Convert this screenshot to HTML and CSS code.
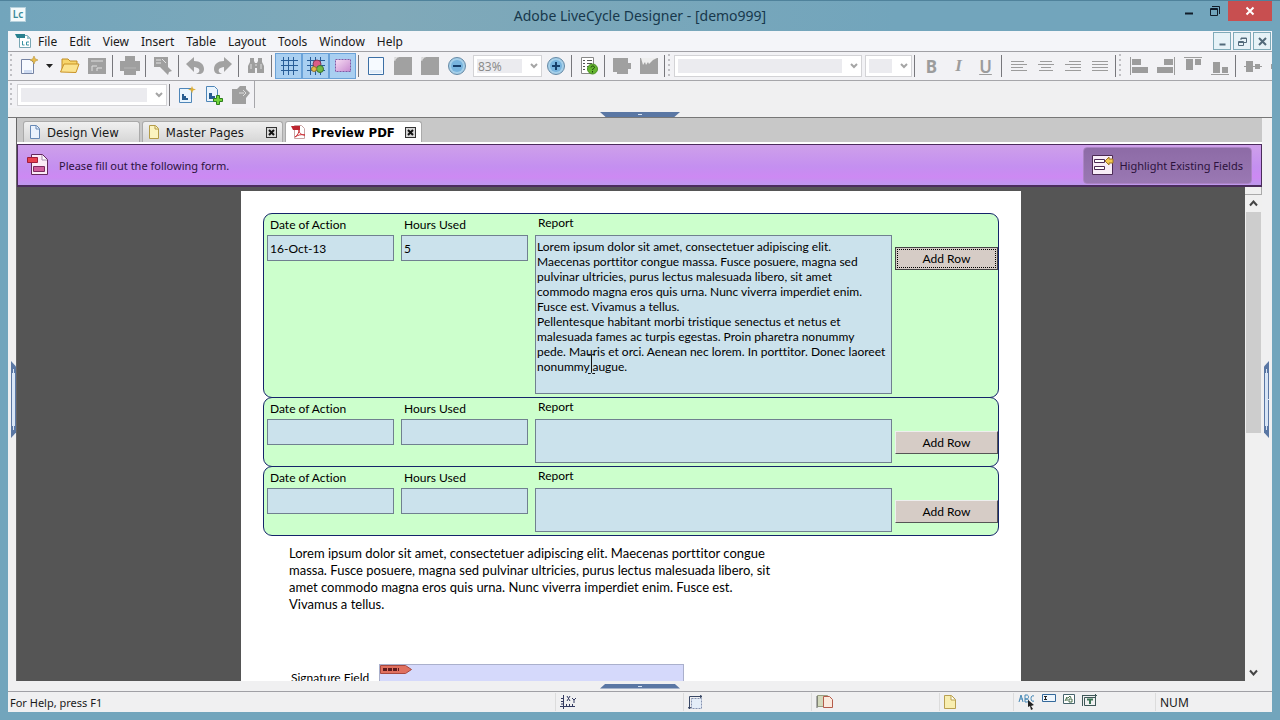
FILE: index.html
```
<!DOCTYPE html>
<html lang="en">
<head>
  <meta charset="UTF-8" />
  <meta name="viewport" content="width=device-width, initial-scale=1.0"/>
  <title>Adobe LiveCycle Designer - [demo999]</title>
  <link rel="stylesheet" href="styles.css">
</head>
<body>
  <header class="title-bar">
    <span class="app-icon">Lc</span>
    <h1>Adobe LiveCycle Designer - [demo999]</h1>
    <div class="window-buttons">
      <button type="button" aria-label="Minimize"><svg width="12" height="12"><path d="M2 8.500h8" stroke="#111d2a" stroke-width="2"/></svg></button>
      <button type="button" aria-label="Restore"><svg width="12" height="12" fill="none" stroke="#111d2a"><path d="M3 1.500h7.500V9"/><path d="M1.500 3.500h7v7h-7zM1.500 4.500h7"/></svg></button>
      <button type="button" class="close" aria-label="Close"><svg width="10" height="10"><path d="M1.500 1.500l7 7M8.500 1.500l-7 7" stroke="#fff" stroke-width="2"/></svg></button>
    </div>
  </header>

  <div class="client">
    <nav class="menu-bar">
      <svg class="menu-icon" width="18" height="17"><path d="M4.500 2.500h8l3 3v9h-11z" fill="#fff" stroke="#7aa7b5"/><path d="M12 2l4 4h-4z" fill="#9bc3cc"/><path d="M0 1h10v4H2z" fill="#28808f"/><path d="M7.500 8v4h2M14 9h-2.500v3H14" fill="none" stroke="#3b93a2"/></svg>
      <a href="#">File</a>
      <a href="#">Edit</a>
      <a href="#">View</a>
      <a href="#">Insert</a>
      <a href="#">Table</a>
      <a href="#">Layout</a>
      <a href="#">Tools</a>
      <a href="#">Window</a>
      <a href="#">Help</a>
      <div class="child-buttons">
        <button type="button" aria-label="Minimize document"><svg width="11" height="11"><path d="M2.500 8.500h6" stroke="#526a7a" stroke-width="2"/></svg></button>
        <button type="button" aria-label="Restore document"><svg width="11" height="11" fill="none" stroke="#526a7a"><path d="M4 4V2h5.500v4.500H7M4 2.500h5"/><path d="M1.500 5.500h5v4h-5zM1.500 6.500h5"/></svg></button>
        <button type="button" aria-label="Close document"><svg width="11" height="11"><path d="M2 2l7 7M9 2l-7 7" stroke="#526a7a" stroke-width="2"/></svg></button>
      </div>
    </nav>

    <div class="toolbar">
      <span class="grip"></span>
      <button type="button" aria-label="New"><svg width="20" height="20"><path d="M2.500 3.500h9l3 3v11h-12z" fill="#f7faff" stroke="#7583a3"/><path d="M5 14h8v3H5z" fill="#cfdcf2"/><path d="M15 0l1.200 2.800L19 4l-2.800 1.200L15 8l-1.200-2.800L11 4l2.800-1.200z" fill="#e7bd4d" stroke="#bb9440" stroke-width=".6"/></svg></button>
      <button type="button" class="drop" aria-label="New options"><svg width="7" height="4"><path d="M0 0h7L3.500 4z" fill="#222"/></svg></button>
      <button type="button" aria-label="Open"><svg width="20" height="20"><path d="M2 15V3h6l2 2h7v4" fill="#f7d56b" stroke="#c08d25"/><path d="M0.500 16L4 8h15l-3 8.500z" fill="#fbe38f" stroke="#c99327"/></svg></button>
      <button type="button" aria-label="Save" disabled><svg width="18" height="18"><path d="M0 1h18v16H0z" fill="#a0a0a0"/><path d="M4 9h5M4 9v5M9 11h5M9 11v3M3 4h12" stroke="#dedede" fill="none"/></svg></button>
      <span class="sep"></span>
      <button type="button" aria-label="Print" disabled><svg width="20" height="20"><path d="M5 0h10v5h5v10h-4v4H4v-4H0V5h5z" fill="#9f9f9f"/><path d="M4 12h12" stroke="#b5b5b5"/></svg></button>
      <span class="sep"></span>
      <button type="button" aria-label="Import" disabled><svg width="20" height="20"><path d="M1 1h14v10l4 4-3 1-1 3-5-5-3-3H1z" fill="#9f9f9f"/><path d="M3 4h5M3 7h5M9 3l4 4" stroke="#e4e4e4"/></svg></button>
      <span class="sep"></span>
      <button type="button" aria-label="Undo" disabled><svg width="20" height="20"><path d="M0 8l8-7v4c6 0 10 3 10 8 0 3-2 5-5 5h-3c3-1 4-3 3-5-1-1-3-2-5-2v5z" fill="#a2a2a2"/></svg></button>
      <button type="button" aria-label="Redo" disabled><svg width="20" height="20"><path d="M19 8l-8-7v4C5 5 1 8 1 13c0 3 2 5 5 5h3c-3-1-4-3-3-5 1-1 3-2 5-2v5z" fill="#a2a2a2"/></svg></button>
      <span class="sep"></span>
      <button type="button" aria-label="Find" disabled><svg width="18" height="18"><path d="M3 1h4v3l1 2h2l1-2V1h4v4l2 4v7h-7v-5H8v5H1V9l2-4z" fill="#9e9e9e"/><path d="M4 7v5M14 7v5M8 8h2" stroke="#ddd"/></svg></button>
      <span class="sep"></span>
      <button type="button" class="pressed" aria-label="Show grid"><svg width="18" height="18"><path d="M1 3.500h17M1 8.500h17M1 13.500h17M3.500 0v18M8.500 0v18M13.500 0v18" stroke="#285d98"/></svg></button>
      <button type="button" class="pressed" aria-label="Snap to grid"><svg width="20" height="18"><path d="M1 3.500h18M1 8.500h18M1 13.500h18M4.500 0v18M9.500 0v18M14.500 0v18" stroke="#285d98"/><circle cx="11" cy="7" r="4" fill="#dc5c86" stroke="#7d3b5a"/><circle cx="14" cy="12" r="3.500" fill="#70ba45" stroke="#3b7530"/><circle cx="8" cy="12" r="2.500" fill="#e6b94a" stroke="#99762c"/></svg></button>
      <button type="button" class="pressed" aria-label="Object boundaries"><svg width="18" height="16"><defs><linearGradient id="pink" x2="1" y2="1"><stop stop-color="#f6dcf3"/><stop offset="1" stop-color="#c88bd0"/></linearGradient></defs><path d="M1.500 1.500h15v12h-15z" fill="url(#pink)" stroke="#8259a5" stroke-dasharray="2 1"/></svg></button>
      <span class="sep"></span>
      <button type="button" aria-label="Fit page"><svg width="18" height="20"><path d="M1.500 1.500h15v17h-15z" fill="#f6faff" stroke="#3c6fa5"/><path d="M3 14h12v3H3z" fill="#e0ebf8"/></svg></button>
      <button type="button" aria-label="Fit width" disabled><svg width="18" height="18"><path d="M0 4l4-4h14v18H0z" fill="#a1a1a1"/><path d="M1 0h4M1 0v4" stroke="#ccc"/></svg></button>
      <button type="button" aria-label="Actual size" disabled><svg width="18" height="18"><path d="M0 4l4-4h14v18H0z" fill="#a1a1a1"/><path d="M1 0h4M1 0v4" stroke="#ccc"/></svg></button>
      <button type="button" aria-label="Zoom out"><svg width="20" height="20"><circle cx="10" cy="10" r="8.500" fill="#a5cfe9" stroke="#6689a5"/><circle cx="10" cy="10" r="6" fill="#78b4de"/><path d="M6 10h8" stroke="#173f6b" stroke-width="2"/></svg></button>
      <span class="combo zoom"><select aria-label="Zoom" disabled><option>83%</option></select><svg width="8" height="6"><path d="M1 1l3 3 3-3" fill="none" stroke="#a5a5a5" stroke-width="2"/></svg></span>
      <button type="button" aria-label="Zoom in"><svg width="20" height="20"><circle cx="10" cy="10" r="8.500" fill="#a5cfe9" stroke="#6689a5"/><circle cx="10" cy="10" r="6" fill="#78b4de"/><path d="M6 10h8M10 6v8" stroke="#173f6b" stroke-width="2"/></svg></button>
      <span class="sep"></span>
      <button type="button" aria-label="Form report"><svg width="20" height="20"><path d="M2.500 1.500h12v16h-12z" fill="#fff" stroke="#888"/><path d="M4 4.500h2M8 4.500h5M4 7.500h2M8 7.500h5M4 10.500h2M8 10.500h3M4 13.500h2" stroke="#555"/><circle cx="13.500" cy="13" r="5" fill="#65b52f" stroke="#4b9125"/><path d="M12 11.500c0-2 3.500-2 3.500 0 0 1-2 1-2 2.500M13.500 15v1.500" fill="none" stroke="#183f0c"/></svg></button>
      <span class="sep"></span>
      <button type="button" aria-label="Distribute" disabled><svg width="20" height="18"><path d="M1 1h15v5h3v6h-3v5H5v-2H1z" fill="#a0a0a0"/></svg></button>
      <button type="button" aria-label="Sample data" disabled><svg width="20" height="18"><path d="M1 1h18v16H1z" fill="#a0a0a0"/><path d="M2 1l2 7 2-3 1 3 2-3 1 2 4-4 4-2z" fill="#eee"/></svg></button>
      <span class="sep"></span>
      <span class="grip"></span>
      <span class="combo font"><select aria-label="Font" disabled><option></option></select><svg width="8" height="6"><path d="M1 1l3 3 3-3" fill="none" stroke="#a5a5a5" stroke-width="2"/></svg></span>
      <span class="combo size"><select aria-label="Font size" disabled><option></option></select><svg width="8" height="6"><path d="M1 1l3 3 3-3" fill="none" stroke="#a5a5a5" stroke-width="2"/></svg></span>
      <span class="sep"></span>
      <button type="button" class="letter bold" disabled>B</button>
      <button type="button" class="letter italic" disabled>I</button>
      <button type="button" class="letter underline" disabled>U</button>
      <span class="sep"></span>
      <button type="button" aria-label="Align left" disabled><svg width="18" height="12"><path d="M1 1.500h13M1 4.500h16M1 7.500h12M1 10.500h16" stroke="#9c9c9c"/></svg></button>
      <button type="button" aria-label="Align center" disabled><svg width="18" height="12"><path d="M3 1.500h12M1 4.500h16M4 7.500h10M2 10.500h14" stroke="#9c9c9c"/></svg></button>
      <button type="button" aria-label="Align right" disabled><svg width="18" height="12"><path d="M5 1.500h12M1 4.500h16M6 7.500h11M1 10.500h16" stroke="#9c9c9c"/></svg></button>
      <button type="button" aria-label="Justify" disabled><svg width="18" height="12"><path d="M1 1.500h16M1 4.500h16M1 7.500h16M1 10.500h16" stroke="#9c9c9c"/></svg></button>
      <span class="sep"></span>
      <span class="grip"></span>
      <button type="button" aria-label="Align objects left" disabled><svg width="18" height="18"><path d="M.5 0v18" stroke="#9c9c9c"/><path d="M2 2h9v6H2zM2 10h16v6H2z" fill="#9c9c9c"/></svg></button>
      <button type="button" aria-label="Align objects right" disabled><svg width="18" height="18"><path d="M17.500 0v18" stroke="#9c9c9c"/><path d="M7 2h9v6H7zM0 10h16v6H0z" fill="#9c9c9c"/></svg></button>
      <button type="button" aria-label="Align objects top" disabled><svg width="18" height="18"><path d="M0 .5h18" stroke="#9c9c9c"/><path d="M2 2h7v11H2zM11 2h6v6h-6z" fill="#9c9c9c"/></svg></button>
      <button type="button" aria-label="Align objects bottom" disabled><svg width="18" height="20"><path d="M0 18.500h18" stroke="#9c9c9c"/><path d="M2 6h7v11H2zM11 11h6v6h-6z" fill="#9c9c9c"/></svg></button>
      <span class="sep"></span>
      <button type="button" aria-label="Align objects middle" disabled><svg width="18" height="18"><path d="M0 9.500h18" stroke="#9c9c9c"/><path d="M2 4h7v11H2zM11 7h5v5h-5z" fill="#9c9c9c"/></svg></button>
      <button type="button" aria-label="Align objects center" disabled><svg width="18" height="18"><path d="M0 7h18v5H0z" fill="#9c9c9c"/></svg></button>
    </div>

    <div class="toolbar style-bar">
      <span class="grip"></span>
      <span class="combo style"><select aria-label="Style" disabled><option></option></select><svg width="8" height="6"><path d="M1 1l3 3 3-3" fill="none" stroke="#a5a5a5" stroke-width="2"/></svg></span>
      <span class="sep"></span>
      <button type="button" aria-label="New style"><svg width="18" height="18"><path d="M1.500 2.500h12v14h-12z" fill="#e9f4fd" stroke="#4f86b8"/><path d="M4 8h2v2h2v2h2v2H4z" fill="#255c91"/><path d="M14 0l1 2.500 3 1-3 1-1 3-1-3-3-1 3-1z" fill="#dcae38"/></svg></button>
      <button type="button" aria-label="Add style"><svg width="20" height="20"><path d="M2.500 1.500h8l3 3v12h-11z" fill="#e9f4fd" stroke="#4f86b8"/><path d="M5 8h3v3h3v3H5z" fill="#255c91"/><path d="M12.500 10.500h3v3h3v3h-3v3h-3v-3h-3v-3h3z" fill="#72d43a" stroke="#2d7e1d"/></svg></button>
      <button type="button" aria-label="Edit style" disabled><svg width="20" height="20"><path d="M1 4h5l3-3h6v3l4 4-4 5v6H1z" fill="#9f9f9f"/><path d="M8 8h5M12 5l3 3-3 3" stroke="#ddd" fill="none"/></svg></button>
    </div>

    <div class="strip top"><span class="handle"></span></div>

    <main class="workspace">
      <div class="side left"><span class="handle"></span></div>
      <section class="document">
        <div class="tabs">
          <button type="button" class="tab"><svg width="12" height="14"><path d="M1.500.500h6l3 3v10h-9z" fill="#eaf2fd" stroke="#6688b5"/><path d="M7 1v3h3" fill="none" stroke="#6688b5"/></svg><span>Design View</span></button>
          <button type="button" class="tab"><svg width="12" height="14"><path d="M1.500.500h6l3 3v10h-9z" fill="#fbf3bf" stroke="#b49c48"/><path d="M7 1v3h3" fill="none" stroke="#b49c48"/></svg><span>Master Pages</span><i class="tab-close"><svg width="9" height="9"><path d="M2 2l5 5M7 2L2 7" stroke="#111" stroke-width="2"/></svg></i></button>
          <button type="button" class="tab active"><svg width="15" height="14"><path d="M3.500.500h7l3 3v10h-10z" fill="#fff" stroke="#c9a3a3"/><path d="M0 1h9v4H2z" fill="#bd2630"/><path d="M4 12c3-2 4-5 4-7 0 3 2 5 6 5-4-1-7 0-10 2z" fill="none" stroke="#cb3137"/></svg><span>Preview PDF</span><i class="tab-close"><svg width="9" height="9"><path d="M2 2l5 5M7 2L2 7" stroke="#111" stroke-width="2"/></svg></i></button>
        </div>

        <div class="message-bar">
          <svg width="22" height="24"><path d="M4.500 1.500h11l5 5v15h-16z" fill="#fbeaf6" stroke="#63285c"/><path d="M15 2v5h5" fill="#fff" stroke="#a58bac"/><path d="M.500 4.500h10v5h-10z" fill="#e8414e" stroke="#9f1d3a"/><path d="M6.500 13.500h11v5h-11z" fill="#cf5e9c" stroke="#7b2960"/></svg>
          <p>Please fill out the following form.</p>
          <button type="button" class="highlight"><svg width="22" height="20"><path d="M.500.500h20v19H.500z" fill="#f7ecf7" stroke="#4c2a55"/><path d="M2.500 4.500h10v3h-10zM2.500 11.500h10v3h-10z" fill="#fff" stroke="#4c2a55"/><path d="M13 6l4-4v2h4v4h-4v2z" fill="#f2c751" stroke="#9b7324"/></svg>Highlight Existing Fields</button>
        </div>

        <div class="viewer">
          <div class="canvas">
            <article class="page">
              <form>
                <div class="row tall">
                  <div class="field">
                    <label for="date1">Date of Action</label>
                    <input type="text" id="date1" value="16-Oct-13" />
                  </div>
                  <div class="field">
                    <label for="hours1">Hours Used</label>
                    <input type="text" id="hours1" value="5" />
                  </div>
                  <div class="field report">
                    <label for="report1">Report</label>
                    <textarea id="report1">Lorem ipsum dolor sit amet, consectetuer adipiscing elit.
Maecenas porttitor congue massa. Fusce posuere, magna sed
pulvinar ultricies, purus lectus malesuada libero, sit amet
commodo magna eros quis urna. Nunc viverra imperdiet enim.
Fusce est. Vivamus a tellus.
Pellentesque habitant morbi tristique senectus et netus et
malesuada fames ac turpis egestas. Proin pharetra nonummy
pede. Mauris et orci. Aenean nec lorem. In porttitor. Donec laoreet
nonummy augue.</textarea>
                    <svg class="text-cursor" width="9" height="20"><path d="M1 .5h2.500l1 1 1-1H8M4.500 1v17M1 19.500h2.500l1-1 1 1H8" fill="none" stroke="#111"/></svg>
                  </div>
                  <button type="button" class="add-row focused">Add Row</button>
                </div>
                <div class="row">
                  <div class="field">
                    <label for="date2">Date of Action</label>
                    <input type="text" id="date2" />
                  </div>
                  <div class="field">
                    <label for="hours2">Hours Used</label>
                    <input type="text" id="hours2" />
                  </div>
                  <div class="field report">
                    <label for="report2">Report</label>
                    <textarea id="report2"></textarea>
                  </div>
                  <button type="button" class="add-row">Add Row</button>
                </div>
                <div class="row">
                  <div class="field">
                    <label for="date3">Date of Action</label>
                    <input type="text" id="date3" />
                  </div>
                  <div class="field">
                    <label for="hours3">Hours Used</label>
                    <input type="text" id="hours3" />
                  </div>
                  <div class="field report">
                    <label for="report3">Report</label>
                    <textarea id="report3"></textarea>
                  </div>
                  <button type="button" class="add-row">Add Row</button>
                </div>
              </form>
              <p class="body-text">Lorem ipsum dolor sit amet, consectetuer adipiscing elit. Maecenas porttitor congue<br>massa. Fusce posuere, magna sed pulvinar ultricies, purus lectus malesuada libero, sit<br>amet commodo magna eros quis urna. Nunc viverra imperdiet enim. Fusce est.<br>Vivamus a tellus.</p>
              <div class="signature">
                <span>Signature Field</span>
                <button type="button" class="sign-here" aria-label="Sign here"><svg width="32" height="9"><path d="M.500.500h25l6 4-6 4h-25z" fill="#e0705f" stroke="#a8483f"/><path d="M3 4.500h16" stroke="#5f1a1c" stroke-width="3" stroke-dasharray="4 1"/></svg></button>
              </div>
            </article>
          </div>
          <div class="scrollbar">
            <div class="splitter"></div>
            <button type="button" aria-label="Scroll up"><svg width="9" height="7"><path d="M1 5.500l3.500-4 3.500 4" fill="none" stroke="#444" stroke-width="2"/></svg></button>
            <div class="track"><div class="thumb"></div></div>
            <button type="button" aria-label="Scroll down"><svg width="9" height="7"><path d="M1 1.500l3.500 4 3.500-4" fill="none" stroke="#444" stroke-width="2"/></svg></button>
          </div>
        </div>
      </section>
      <div class="side right"><span class="handle"></span></div>
    </main>

    <div class="strip bottom"><span class="handle"></span></div>

    <footer class="status-bar">
      <span class="help">For Help, press F1</span>
      <span class="pane coords"><svg width="16" height="14"><path d="M3.500 0v14M0 11.500h15M1 3.500h2M1 6.500h2M1 9h2M6.500 9v3M9.500 9v3M12.500 9v3" stroke="#333a60"/><path d="M7 1l3 5M10 1L7 6M12 3l2 2 2-2M14 5v3" stroke="#333a60" fill="none"/></svg></span>
      <span class="pane dims"><svg width="16" height="15"><path d="M3.500 3.500h10v10h-10z" fill="#e4edf8" stroke="#8492b0" stroke-dasharray="2 1"/><path d="M1.500 14V1.500H14M12 0l2 1.500L12 3M0 12l1.500 2L3 12" fill="none" stroke="#384764"/></svg></span>
      <span class="pane master"><svg width="18" height="14"><path d="M1.500.500h10v11h-10z" fill="#d3d9bc" stroke="#999f83"/><path d="M7.500 1.500h6l3 3v8h-9z" fill="#fbeade" stroke="#b45b4a"/><path d="M1 1v12" stroke="#666"/></svg></span>
      <span class="pane page-no"><svg width="12" height="14"><path d="M.500.500h7l4 4v9h-11z" fill="#f8eeb0" stroke="#b9a051"/><path d="M7 1v4h4" fill="#fff" stroke="#b9a051"/></svg></span>
      <span class="pane tools">
        <svg width="17" height="16"><path d="M1 8l2-7 2 7M2 5h3M7 1v7h2c2 0 2-3 0-3H7h2c2 0 2-4 0-4zM16 2c-4-2-4 7 0 5" fill="none" stroke="#4286b5"/><path d="M10 6l6 5-3 1 2 3-2 1-1-4-2 1z" fill="#222"/></svg>
        <svg width="14" height="9"><path d="M.500.500h13v7H.500z" fill="#eef6fd" stroke="#34699b"/><path d="M2 2.500h3M3.500 2v4M2 5.500h3" stroke="#222"/></svg>
        <svg width="12" height="11"><path d="M.500.500h11v9H.500z" fill="#fff" stroke="#47636b"/><path d="M2 7l2-4v4M5 4l2-2 1 2M6 5v3h3V5z" stroke="#476f49" fill="none"/></svg>
        <svg width="15" height="13"><path d="M2.500 3.500h11v8h-11zM0 1.500h15M.500 1v11M13.500 0v12" fill="none" stroke="#3e5757"/><path d="M5 5.500h6M8 5v5" stroke="#3c7655" stroke-width="2"/></svg>
      </span>
      <span class="pane num">NUM</span>
    </footer>
  </div>
</body>
</html>
```
FILE: styles.css
```
* {
  box-sizing: border-box;
}
body {
  margin: 0;
  height: 100vh;
  display: flex;
  flex-direction: column;
  overflow: hidden;
  background: #72a5bc;
  border-top: 1px solid #4f829b;
  color: #1a1a1a;
  font-family: "Noto Sans", sans-serif;
  font-size: 12px;
}
button {
  display: flex;
  align-items: center;
  justify-content: center;
  padding: 0;
  border: none;
  background: none;
  font: inherit;
  color: inherit;
}
svg {
  flex: none;
  display: block;
}

/* title bar */
.title-bar {
  position: relative;
  flex: none;
  display: flex;
  justify-content: center;
  height: 30px;
  background: linear-gradient(90deg, #72a5bc, #80a9b9 30%, #72a5bc 70%);
}
.title-bar h1 {
  margin: 0;
  font-size: 14px;
  line-height: 30px;
  font-weight: 400;
  color: #17384c;
}
.app-icon {
  position: absolute;
  left: 10px;
  top: 6px;
  width: 16px;
  height: 15px;
  background: #f4fafb;
  border: 1px solid #b5d0dc;
  color: #3b8a99;
  font-size: 10px;
  line-height: 13px;
  font-weight: 600;
  text-align: center;
}
.window-buttons {
  position: absolute;
  right: 8px;
  top: 0;
  display: flex;
  height: 20px;
}
.window-buttons button {
  width: 26px;
}
.window-buttons .close {
  width: 44px;
  background: #c84f50;
}

.client {
  flex: 1;
  min-height: 0;
  margin: 0 8px 8px;
  display: flex;
  flex-direction: column;
  background: #f0f0f1;
}

/* menu */
.menu-bar {
  flex: none;
  display: flex;
  align-items: center;
  height: 21px;
  padding-left: 7px;
  gap: 12px;
  background: #f4f5f9;
  border-bottom: 1px solid #a0a0a5;
}
.menu-bar a {
  color: #1a1a1a;
  text-decoration: none;
}
.menu-icon {
  margin-right: -7px;
}
.child-buttons {
  display: flex;
  gap: 2px;
  margin-left: auto;
  padding-right: 1px;
}
.child-buttons button {
  width: 18px;
  height: 18px;
  border: 1px solid #7faab8;
  background: #e6f2f7;
}

/* toolbars */
.toolbar {
  flex: none;
  display: flex;
  align-items: center;
  height: 29px;
  overflow: hidden;
  background: #f2f2f5;
  border-bottom: 1px solid #a6a6aa;
}
.toolbar button {
  flex: none;
  width: 27px;
  height: 26px;
}
.toolbar .drop {
  width: 14px;
}
.toolbar .pressed {
  background: #a9cff1;
  border: 1px solid #6aa2d8;
}
.grip {
  flex: none;
  width: 2px;
  height: 24px;
  margin: 0 3px 0 2px;
  background: repeating-linear-gradient(#c0c0c4 0 2px, transparent 2px 5px);
}
.sep {
  flex: none;
  width: 1px;
  height: 22px;
  margin: 0 3px 0 2px;
  background: #77777c;
}
.sep + .grip {
  margin: 0 4px 0 0;
}
.combo {
  flex: none;
  position: relative;
  height: 22px;
  margin-right: 3px;
}
.combo select {
  appearance: none;
  width: 100%;
  height: 100%;
  padding: 0 4px;
  border: 1px solid #d3d3d6;
  background: linear-gradient(#ebebef, #ebebef) 3px 3px / calc(100% - 22px) 14px no-repeat #fff;
  color: #8b8b8b;
  font: inherit;
  opacity: 1;
}
.combo svg {
  position: absolute;
  right: 4px;
  top: 8px;
}
.zoom {
  width: 69px;
  margin: 0 0 0 3px;
}
.font {
  width: 188px;
}
.size {
  width: 47px;
  margin-right: 0;
}
.toolbar .letter {
  font-size: 17px;
  color: #9c9c9c;
  font-weight: 700;
}
.toolbar .italic {
  font-family: "Liberation Serif", serif;
  font-style: italic;
}
.toolbar .underline {
  text-decoration: underline;
  font-weight: 600;
}
.style-bar {
  align-self: flex-start;
  height: 27px;
  border-bottom: none;
  border-right: 1px solid #a6a6aa;
}
.style {
  width: 150px;
  margin: 0 0 0 2px;
}

/* collapse handles */
.strip {
  flex: none;
  display: flex;
  justify-content: center;
}
.strip.top {
  height: 10px;
  align-items: flex-end;
  border-bottom: 1px solid #777;
}
.strip.bottom {
  height: 11px;
  align-items: center;
  border-bottom: 1px solid #a0a0a5;
}
.strip .handle {
  width: 80px;
  height: 5px;
  background: radial-gradient(#d8e5f5 0 2px, transparent 2px), #5a77a4;
  clip-path: polygon(0 0, 100% 0, 93% 100%, 7% 100%);
}
.bottom .handle {
  clip-path: polygon(7% 0, 93% 0, 100% 100%, 0 100%);
}
.side {
  flex: none;
  display: flex;
  align-items: center;
}
.left {
  width: 8px;
  justify-content: flex-end;
}
.right {
  width: 10px;
  padding-left: 2px;
}
.side .handle {
  width: 5px;
  height: 77px;
  background: radial-gradient(#d8e5f5 0 2px, transparent 2px), #5a77a4;
  clip-path: polygon(0 0, 100% 7%, 100% 93%, 0 100%);
}
.right .handle {
  clip-path: polygon(0 7%, 100% 0, 100% 100%, 0 93%);
}

.workspace {
  flex: 1;
  min-height: 0;
  display: flex;
}
.document {
  flex: 1;
  min-width: 0;
  display: flex;
  flex-direction: column;
  border-left: 1px solid #666;
}

/* tabs */
.tabs {
  flex: none;
  display: flex;
  align-items: flex-end;
  height: 26px;
  padding-left: 6px;
  gap: 2px;
  background: #c8c8c8;
  border-bottom: 2px solid #fff;
  font-family: "DejaVu Sans Condensed", "DejaVu Sans", sans-serif;
}
.tab {
  height: 21px;
  padding: 0 5px;
  gap: 6px;
  border: 1px solid #aaa;
  border-bottom: none;
  border-radius: 3px 3px 0 0;
  background: linear-gradient(#f0f0f0, #d6d6d6);
  font-size: 13px;
}
.tab:first-child {
  padding-right: 20px;
}
.tab.active {
  background: #fff;
  color: #000;
  font-weight: 700;
}
.tab-close {
  width: 11px;
  height: 11px;
  margin-left: 4px;
  border: 1px solid #333;
  background: #d8d8d8;
}
.tab:nth-child(2) .tab-close {
  margin-left: 16px;
}

/* message bar */
.message-bar {
  flex: none;
  display: flex;
  align-items: center;
  height: 43px;
  padding: 0 9px;
  gap: 10px;
  border: 1px solid #4b2c5c;
  border-width: 1px 1px 2px;
  background: linear-gradient(#cea0ea, #c48ff0 55%, #cd89f3 80%, #bd98ec);
  color: #2c123c;
  font-size: 11px;
}
.message-bar p {
  flex: 1;
  margin: 0;
}
.highlight {
  height: 37px;
  padding: 0 8px;
  gap: 5px;
  border: 1px solid #ab84c4;
  border-radius: 4px;
  background: linear-gradient(#8d6ba6, #9a78b3);
}

/* pdf viewer */
.viewer {
  flex: 1;
  min-height: 0;
  display: flex;
}
.canvas {
  flex: 1;
  overflow: hidden;
  padding-top: 4px;
  background: #555;
}
.page {
  max-width: 780px;
  min-height: 600px;
  margin: 0 auto;
  padding: 22px;
  background: #fff;
  color: #000;
  font-family: Lato, sans-serif;
  font-variant-ligatures: none;
}
.row {
  display: grid;
  grid-template-columns: 127px 127px 1fr 103px;
  column-gap: 7px;
  min-height: 70px;
  margin-bottom: -1px;
  padding: 0 0 3px 3px;
  border: 1px solid #14246a;
  border-radius: 9px;
  background: #cfc;
}
.row.tall {
  min-height: 185px;
}
.field {
  position: relative;
  display: flex;
  flex-direction: column;
}
.field label {
  height: 21px;
  padding-left: 3px;
  line-height: 22px;
}
.report label {
  line-height: 18px;
}
.field input,
.field textarea {
  width: 100%;
  margin: 0;
  padding: 0 2px;
  border: 1px solid #708090;
  border-radius: 0;
  outline: none;
  background: #cbe2ec;
  color: #000;
  font: inherit;
}
.field input {
  height: 26px;
}
.field textarea {
  flex: 1;
  padding: 3px 1px 0;
  line-height: 15px;
  resize: none;
  overflow: hidden;
  white-space: pre;
}
.report {
  margin-right: -4px;
}
.text-cursor {
  position: absolute;
  left: 52px;
  top: 140px;
}
.add-row {
  height: 23px;
  margin-top: 33px;
  border: 1px solid;
  border-color: #eee #555 #555 #eee;
  background: #d6ccc6;
  color: #000;
}
.add-row.focused {
  border-color: #444;
  outline: 1px dotted #000;
  outline-offset: -3px;
}
.body-text {
  margin: 10px 0 0;
  padding-left: 26px;
  font-size: 13px;
  line-height: 17px;
}
.signature {
  display: flex;
  align-items: flex-start;
  gap: 10px;
  margin-top: 51px;
  padding-left: 28px;
}
.signature span {
  padding-top: 6px;
}
.sign-here {
  align-items: flex-start;
  justify-content: flex-start;
  width: 305px;
  height: 50px;
  border: 1px solid #aab0cc;
  background: #d5d9fb;
}

.scrollbar {
  flex: none;
  display: flex;
  flex-direction: column;
  width: 17px;
  background: #f0f0f0;
}
.splitter {
  height: 8px;
  border-bottom: 1px solid #aaa;
  border-right: 1px solid #aaa;
}
.scrollbar button {
  height: 17px;
}
.track {
  flex: 1;
  padding: 0 1px;
}
.thumb {
  height: 49%;
  background: #cdcdcd;
}

/* status bar */
.status-bar {
  flex: none;
  display: flex;
  align-items: center;
  height: 20px;
  font-size: 11px;
}
.help {
  flex: 1;
  padding-left: 2px;
}
.pane {
  display: flex;
  align-items: center;
  height: 18px;
  padding-left: 4px;
  border-left: 1px solid #dcdcdc;
}
.coords,
.dims,
.master {
  width: 128px;
}
.page-no {
  width: 74px;
}
.tools {
  width: 142px;
  align-items: flex-start;
  padding-top: 1px;
  gap: 7px;
}
.num {
  width: 117px;
  font-size: 12px;
}
```
